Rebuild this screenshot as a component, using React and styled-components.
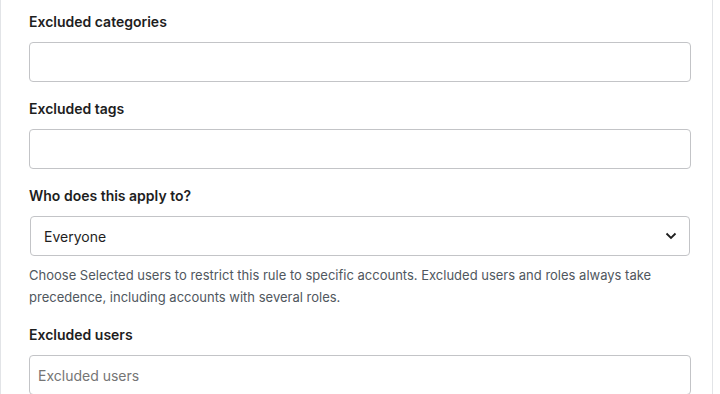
import React from "react";
import styled, { createGlobalStyle } from "styled-components";

const GlobalStyle = createGlobalStyle`
  html, body {
    margin: 0;
    padding: 0;
    background: #ffffff;
  }
  body {
    font-family: Inter, "Noto Sans", "Liberation Sans", sans-serif;
    -webkit-font-smoothing: antialiased;
  }
`;

const Panel = styled.div`
  box-sizing: border-box;
  width: 713px;
  min-height: 394px;
  border-left: 1px solid #e2e4e7;
  border-right: 1px solid #e2e4e7;
  padding: 12px 20px 0 28px;
  display: flex;
  flex-direction: column;
  gap: 17px;
`;

const Field = styled.div`
  display: flex;
  flex-direction: column;
`;

const Label = styled.label`
  font-size: 14px;
  font-weight: 600;
  line-height: 20px;
  color: #1e1e1e;
  margin-bottom: 10px;
`;

const TextInput = styled.input`
  box-sizing: border-box;
  width: 662px;
  height: 40px;
  border: 1px solid #c3c4c7;
  border-radius: 4px;
  padding: 0 8px;
  font-family: inherit;
  font-size: 14px;
  color: #1e1e1e;
  background: #fff;
  outline: none;
  &::placeholder {
    color: #757575;
  }
`;

const SelectBox = styled.div`
  box-sizing: border-box;
  width: 660px;
  height: 40px;
  margin-left: 1px;
  border: 1px solid #c3c4c7;
  border-radius: 4px;
  padding: 0 12px 0 13px;
  display: flex;
  align-items: center;
  justify-content: space-between;
  font-size: 14px;
  color: #1e1e1e;
  background: #fff;
`;

const Help = styled.p`
  margin: 8px 0 0;
  font-size: 13px;
  line-height: 22px;
  color: #50575e;
`;

const Chevron = () => (
  <svg width="12" height="8" viewBox="0 0 12 8" fill="none">
    <path d="M1.5 1.5 L6 6 L10.5 1.5" stroke="#1e1e1e" strokeWidth="1.8" />
  </svg>
);

export default function App() {
  return (
    <>
      <GlobalStyle />
      <Panel>
        <Field>
          <Label>Excluded categories</Label>
          <TextInput />
        </Field>
        <Field>
          <Label>Excluded tags</Label>
          <TextInput />
        </Field>
        <Field>
          <Label>Who does this apply to?</Label>
          <SelectBox>
            <span>Everyone</span>
            <Chevron />
          </SelectBox>
          <Help>
            Choose Selected users to restrict this rule to specific accounts.
            Excluded users and roles always take precedence, including accounts
            with several roles.
          </Help>
        </Field>
        <Field>
          <Label>Excluded users</Label>
          <TextInput placeholder="Excluded users" />
        </Field>
      </Panel>
    </>
  );
}
